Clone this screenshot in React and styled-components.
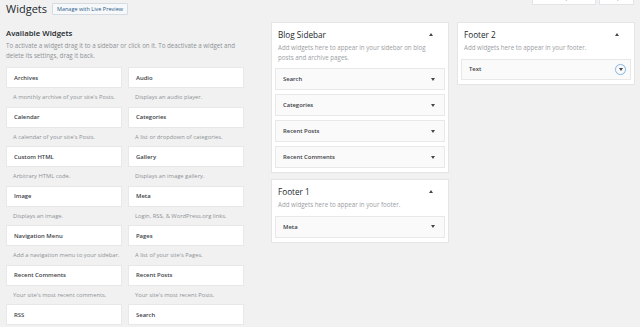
import React from 'react';
import styled, { createGlobalStyle } from 'styled-components';

const Global = createGlobalStyle`
  html, body {
    margin: 0;
    background: #f1f1f1;
  }
  body {
    font-family: 'Open Sans', 'Noto Sans', sans-serif;
    color: #23282d;
    overflow: hidden;
  }
`;

const Page = styled.div`
  position: relative;
  display: flex;
  align-items: flex-start;
  padding-left: 6px;
  width: 640px;
  height: 327px;
  box-sizing: border-box;
  overflow: hidden;
`;

const MetaLinks = styled.div`
  position: absolute;
  top: -8px;
  right: 6px;
  display: flex;
  gap: 3px;
`;

const MetaTab = styled.div`
  width: ${(p) => p.w}px;
  height: 13px;
  box-sizing: border-box;
  background: #fff;
  border: 1px solid #e2e4e7;
  border-top: none;
  font-size: 6px;
  line-height: 8px;
  color: #8d9196;
  display: flex;
  align-items: flex-start;
  justify-content: center;
  padding-top: 2px;
`;

const LeftCol = styled.div`
  width: 238px;
  flex-shrink: 0;
`;

const Header = styled.div`
  display: flex;
  align-items: center;
  height: 18px;
`;

const Title = styled.h1`
  margin: 0;
  font-size: 11px;
  font-weight: 400;
  line-height: 18px;
  color: #23282d;
`;

const PreviewButton = styled.span`
  margin-left: 5px;
  height: 12px;
  box-sizing: border-box;
  padding: 0 4px;
  border: 1px solid #d4dbe1;
  background: #f7f8f9;
  border-radius: 1px;
  font-size: 5.5px;
  color: #2b5d8c;
  display: flex;
  align-items: center;
`;

const SectionTitle = styled.h2`
  margin: 9px 0 0;
  font-size: 7.8px;
  font-weight: 600;
  line-height: 12px;
`;

const Intro = styled.p`
  margin: 2px 0 0;
  font-size: 6.2px;
  line-height: 10px;
  color: #8d9196;
`;

const WidgetGrid = styled.div`
  display: grid;
  grid-template-columns: 116px 116px;
  column-gap: 6px;
  margin-top: 6px;
`;

const Widget = styled.div`
  height: 39.5px;
`;

const WidgetBox = styled.div`
  height: 21px;
  box-sizing: border-box;
  background: #fff;
  border: 1px solid #e8e8e8;
  padding-left: 7px;
  display: flex;
  align-items: center;
  font-size: 5.9px;
  font-weight: 600;
  color: #3c4147;
`;

const WidgetDesc = styled.div`
  padding-left: 7px;
  height: 18.5px;
  display: flex;
  align-items: center;
  white-space: nowrap;
  font-size: 5.8px;
  color: #8d9196;
`;

const SideCol = styled.div`
  width: 178px;
  margin-left: ${(p) => p.gap}px;
  margin-top: 22px;
  display: flex;
  flex-direction: column;
  gap: 6px;
`;

const Panel = styled.div`
  background: #fff;
  border: 1px solid #e5e5e5;
  padding: 5px 3px 4px;
`;

const PanelHead = styled.div`
  display: flex;
  align-items: center;
  justify-content: space-between;
  padding: 0 12px 0 3px;
  height: 12px;
`;

const PanelTitle = styled.h3`
  margin: 0;
  font-size: 8.2px;
  font-weight: 400;
  color: #23282d;
`;

const Arrow = styled.span`
  width: 0;
  height: 0;
  border-left: 2px solid transparent;
  border-right: 2px solid transparent;
  ${(p) => (p.up ? 'border-bottom: 3px solid #40464d;' : 'border-top: 3px solid #40464d;')}
`;

const PanelDesc = styled.p`
  margin: 3px 0 6px;
  padding: 0 3px;
  font-size: 6.2px;
  line-height: 9.5px;
  color: #9a9ea3;
`;

const ItemList = styled.div`
  display: flex;
  flex-direction: column;
  gap: 4px;
`;

const Item = styled.div`
  height: ${(p) => p.h || 22}px;
  box-sizing: border-box;
  background: #fafafa;
  border: 1px solid #e8e8e8;
  display: flex;
  align-items: center;
  justify-content: space-between;
  padding: 0 9px 0 7px;
  font-size: 5.9px;
  font-weight: 600;
  color: #3c4147;
`;

const Toggle = styled.span`
  width: 11px;
  height: 11px;
  box-sizing: border-box;
  margin-right: -5px;
  border: 1px solid #8bb6e0;
  border-radius: 50%;
  box-shadow: 0 0 1px #c6dcf2;
  display: flex;
  align-items: center;
  justify-content: center;
  padding-top: 1px;
`;

const widgets = [
  ['Archives', "A monthly archive of your site's Posts."],
  ['Audio', 'Displays an audio player.'],
  ['Calendar', "A calendar of your site's Posts."],
  ['Categories', 'A list or dropdown of categories.'],
  ['Custom HTML', 'Arbitrary HTML code.'],
  ['Gallery', 'Displays an image gallery.'],
  ['Image', 'Displays an image.'],
  ['Meta', 'Login, RSS, & WordPress.org links.'],
  ['Navigation Menu', 'Add a navigation menu to your sidebar.'],
  ['Pages', "A list of your site's Pages."],
  ['Recent Comments', "Your site's most recent comments."],
  ['Recent Posts', "Your site's most recent Posts."],
  ['RSS', ''],
  ['Search', ''],
];

const SidebarPanel = ({ title, desc, items, focused }) => (
  <Panel>
    <PanelHead>
      <PanelTitle>{title}</PanelTitle>
      <Arrow up />
    </PanelHead>
    <PanelDesc>{desc}</PanelDesc>
    <ItemList>
      {items.map((name) => (
        <Item key={name} h={focused ? 21 : 22}>
          {name}
          {focused ? (
            <Toggle>
              <Arrow />
            </Toggle>
          ) : (
            <Arrow />
          )}
        </Item>
      ))}
    </ItemList>
  </Panel>
);

export default function App() {
  return (
    <Page>
      <Global />
      <MetaLinks>
        <MetaTab w={64}>Screen Options ▾</MetaTab>
        <MetaTab w={35}>Help ▾</MetaTab>
      </MetaLinks>
      <LeftCol>
        <Header>
          <Title>Widgets</Title>
          <PreviewButton>Manage with Live Preview</PreviewButton>
        </Header>
        <SectionTitle>Available Widgets</SectionTitle>
        <Intro>
          To activate a widget drag it to a sidebar or click on it. To deactivate a widget and
          delete its settings, drag it back.
        </Intro>
        <WidgetGrid>
          {widgets.map(([name, desc]) => (
            <Widget key={name}>
              <WidgetBox>{name}</WidgetBox>
              <WidgetDesc>{desc}</WidgetDesc>
            </Widget>
          ))}
        </WidgetGrid>
      </LeftCol>
      <SideCol gap={27}>
        <SidebarPanel
          title="Blog Sidebar"
          desc="Add widgets here to appear in your sidebar on blog posts and archive pages."
          items={['Search', 'Categories', 'Recent Posts', 'Recent Comments']}
        />
        <SidebarPanel
          title="Footer 1"
          desc="Add widgets here to appear in your footer."
          items={['Meta']}
        />
      </SideCol>
      <SideCol gap={8}>
        <SidebarPanel
          title="Footer 2"
          desc="Add widgets here to appear in your footer."
          items={['Text']}
          focused
        />
      </SideCol>
    </Page>
  );
}
